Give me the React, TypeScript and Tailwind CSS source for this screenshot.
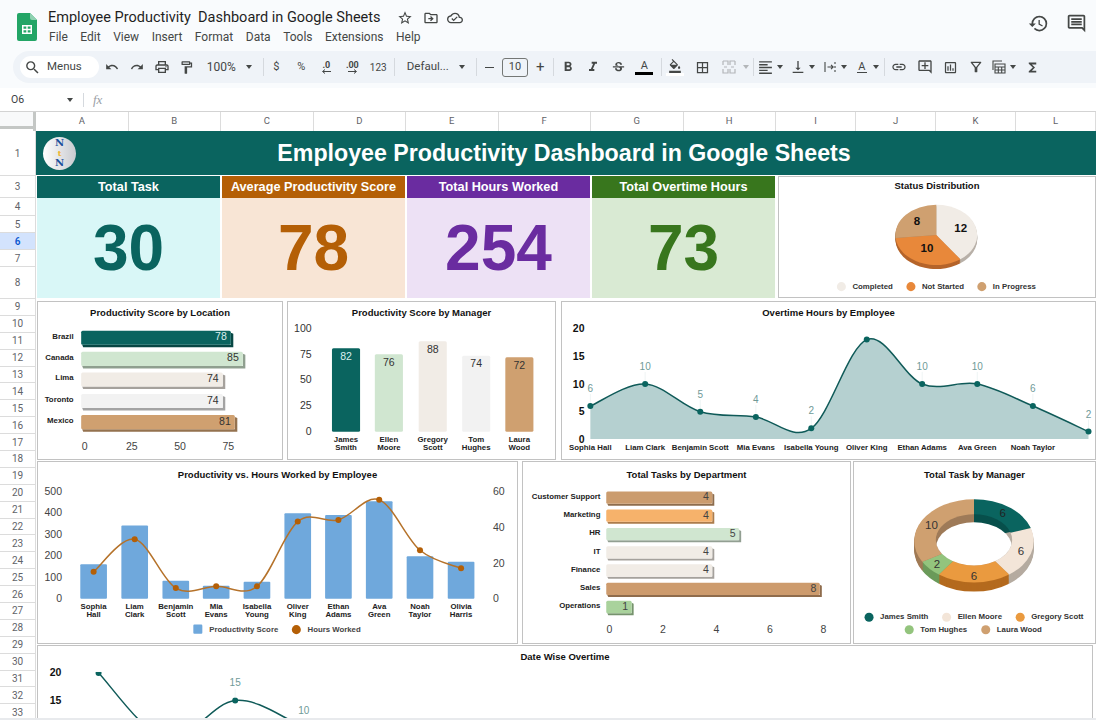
import React from 'react';
import {
  MdSearch, MdUndo, MdRedo, MdOutlinePrint, MdOutlineFormatPaint, MdFormatBold, MdFormatItalic,
  MdStrikethroughS, MdFormatColorFill, MdBorderAll, MdFormatAlignLeft, MdVerticalAlignBottom,
  MdOutlineStarBorder, MdOutlineDriveFileMove, MdOutlineCloudDone, MdHistory, MdLink,
  MdOutlineAddComment, MdOutlineInsertChart, MdOutlineFilterAlt, MdFunctions, MdOutlineInsertComment,
} from 'react-icons/md';

const TEAL = '#0a645f';

type Pt = [number, number];

/** Smooth line through points, same idea as the sheet's "smooth" option. */
function smooth(p: Pt[]) {
  let d = `M${p[0][0]} ${p[0][1]}`;
  for (let i = 0; i < p.length - 1; i++) {
    const a = p[Math.max(i - 1, 0)];
    const b = p[i];
    const c = p[i + 1];
    const e = p[Math.min(i + 2, p.length - 1)];
    d += ` C${b[0] + (c[0] - a[0]) / 6} ${b[1] + (c[1] - a[1]) / 6} ${c[0] - (e[0] - b[0]) / 6} ${c[1] - (e[1] - b[1]) / 6} ${c[0]} ${c[1]}`;
  }
  return d;
}

/** Angles in degrees, clockwise from 12 o'clock. */
function wedge(cx: number, cy: number, rx: number, ry: number, a0: number, a1: number) {
  const r0 = (a0 * Math.PI) / 180;
  const r1 = (a1 * Math.PI) / 180;
  const large = a1 - a0 > 180 ? 1 : 0;
  return `M${cx} ${cy} L${cx + rx * Math.sin(r0)} ${cy - ry * Math.cos(r0)} A${rx} ${ry} 0 ${large} 1 ${cx + rx * Math.sin(r1)} ${cy - ry * Math.cos(r1)} Z`;
}

function Caret({ className = '' }: { className?: string }) {
  return <span className={`h-0 w-0 shrink-0 border-x-[3.5px] border-t-[4px] border-x-transparent border-t-[#444746] ${className}`} />;
}

function Sep({ className = '' }: { className?: string }) {
  return <span className={`h-[18px] w-px shrink-0 bg-[#d5d9de] ${className}`} />;
}

function Tb({ className = '', children }: { className?: string; children: React.ReactNode }) {
  return <span className={`flex h-full shrink-0 items-center justify-center text-[#444746] ${className}`}>{children}</span>;
}

function Decimal({ label, left }: { label: string; left?: boolean }) {
  return (
    <span className="flex flex-col items-center leading-none">
      <span className="text-[9px] font-bold tracking-tight">{label}</span>
      <svg width="11" height="5" viewBox="0 0 11 5" className="-mt-px">
        {left ? <path d="M10 2.5H2M4 .5L1.5 2.5L4 4.5" fill="none" stroke="#444746" strokeWidth="1" /> : <path d="M1 2.5H9M7 .5L9.5 2.5L7 4.5" fill="none" stroke="#444746" strokeWidth="1" />}
      </svg>
    </span>
  );
}

function TitleBar() {
  const menus = ['File', 'Edit', 'View', 'Insert', 'Format', 'Data', 'Tools', 'Extensions', 'Help'];
  return (
    <div className="flex h-[51px] shrink-0 items-start">
      <svg width="20" height="28" viewBox="0 0 20 28" className="ml-[17px] mt-[13px] shrink-0">
        <path d="M2 0H13L20 7V26a2 2 0 0 1-2 2H2a2 2 0 0 1-2-2V2a2 2 0 0 1 2-2Z" fill="#23a566" />
        <path d="M13 0L20 7H15a2 2 0 0 1-2-2Z" fill="#8ed1b1" />
        <path d="M5 12H15V21H5Z M6.5 13.5V15.7H9.3V13.5Z M10.7 13.5V15.7H13.5V13.5Z M6.5 17.2V19.5H9.3V17.2Z M10.7 17.2V19.5H13.5V17.2Z" fill="#fff" fillRule="evenodd" />
      </svg>
      <div className="ml-[11px] flex flex-col">
        <div className="mt-[9px] flex h-[18px] items-center">
          <span className="w-[333px] whitespace-pre text-[14.5px] text-[#1f1f1f]">Employee Productivity  Dashboard in Google Sheets</span>
          <MdOutlineStarBorder className="ml-[16px] text-[#444746]" size={16} />
          <MdOutlineDriveFileMove className="ml-[10px] text-[#444746]" size={16} />
          <MdOutlineCloudDone className="ml-[8px] text-[#444746]" size={16} />
        </div>
        <div className="mt-[2px] flex gap-[12.5px] pl-px text-[12px] leading-[16px] text-[#444746]">
          {menus.map((m) => <span key={m}>{m}</span>)}
        </div>
      </div>
      <div className="ml-auto mr-[9px] mt-[13px] flex items-center gap-[17px] text-[#444746]">
        <MdHistory size={21} />
        <MdOutlineInsertComment size={21} />
      </div>
    </div>
  );
}

function Toolbar() {
  return (
    <div className="ml-[13px] flex h-[32px] shrink-0 items-center rounded-l-[16px] bg-[#eff3f8] pl-[7px] text-[11.5px] text-[#444746]">
      <div className="flex h-[22px] w-[79px] shrink-0 items-center rounded-full bg-white pl-[4px]">
        <MdSearch size={17} />
        <span className="ml-[6px]">Menus</span>
      </div>
      <Tb className="ml-px w-[24.7px]"><MdUndo size={14} /></Tb>
      <Tb className="w-[24.7px]"><MdRedo size={14} /></Tb>
      <Tb className="w-[24.7px]"><MdOutlinePrint size={16} /></Tb>
      <Tb className="w-[24.7px]"><MdOutlineFormatPaint size={15} /></Tb>
      <span className="ml-[8px] w-[30px] shrink-0 text-[12px]">100%</span>
      <Caret className="ml-[9px]" />
      <Sep className="ml-[11px]" />
      <Tb className="w-[25px] text-[11px]">$</Tb>
      <Tb className="w-[25px] text-[11px]">%</Tb>
      <Tb className="w-[25px]"><Decimal label=".0" left /></Tb>
      <Tb className="w-[27px]"><Decimal label=".00" /></Tb>
      <Tb className="w-[25px] text-[10px]">123</Tb>
      <Sep className="ml-[3.5px]" />
      <span className="ml-[11.5px] w-[45px] shrink-0">Defaul...</span>
      <Caret className="ml-[7px]" />
      <Sep className="ml-[11px]" />
      <Tb className="w-[25px]"><span className="h-px w-[9px] bg-[#444746]" /></Tb>
      <div className="flex h-[19px] w-[26.5px] shrink-0 items-center justify-center rounded-[3px] border border-[#747775] text-[11px]">10</div>
      <Tb className="w-[24px] text-[15px]">+</Tb>
      <Sep className="ml-px" />
      <Tb className="ml-[1.5px] w-[25px]"><MdFormatBold size={16} /></Tb>
      <Tb className="w-[25px]"><MdFormatItalic size={16} /></Tb>
      <Tb className="w-[25px]"><MdStrikethroughS size={15} /></Tb>
      <Tb className="w-[27px]">
        <span className="flex flex-col items-center leading-none">
          <span className="text-[11px]">A</span>
          <span className="mt-[1px] h-[3px] w-[18px] bg-black" />
        </span>
      </Tb>
      <Sep className="ml-[3px]" />
      <Tb className="w-[27px]">
        <span className="flex flex-col items-center leading-none">
          <MdFormatColorFill size={14} />
          <span className="h-[3px] w-[18px] bg-white" />
        </span>
      </Tb>
      <Tb className="w-[27px]"><MdBorderAll size={15} /></Tb>
      <Tb className="w-[27px]">
        <svg width="14" height="14" viewBox="0 0 14 14" fill="none" stroke="#b3b6b9" strokeWidth="1.2">
          <path d="M1 1H6V5M1 1V5M1 9V13H6V9M13 1H8V5M13 1V5M13 9V13H8V9M2 7H5M9 7H12" />
        </svg>
      </Tb>
      <Caret className="border-t-[#b3b6b9]" />
      <Sep className="ml-[4px]" />
      <Tb className="ml-[1px] w-[22px]"><MdFormatAlignLeft size={17} /></Tb>
      <Caret className="ml-[0.5px]" />
      <Tb className="ml-[3.5px] w-[22px]"><MdVerticalAlignBottom size={16} /></Tb>
      <Caret className="ml-[0.5px]" />
      <Tb className="ml-[3.5px] w-[22px]">
        <svg width="12" height="12" viewBox="0 0 12 12" fill="none" stroke="#444746" strokeWidth="1.1">
          <path d="M1 1V11M11 1V3M11 5V7M11 9V11M3.5 6H9M7 3.8L9.2 6L7 8.2" />
        </svg>
      </Tb>
      <Caret />
      <Tb className="ml-[4px] w-[22px]">
        <span className="flex flex-col items-center leading-none">
          <span className="text-[11px]">A</span>
          <span className="h-px w-[10px] bg-[#444746]" />
        </span>
      </Tb>
      <Caret />
      <Sep className="ml-[5.5px]" />
      <Tb className="ml-[2px] w-[24px]"><MdLink size={16} /></Tb>
      <Tb className="ml-px w-[26px]"><MdOutlineAddComment size={16} /></Tb>
      <Tb className="w-[25px]"><MdOutlineInsertChart size={15} /></Tb>
      <Tb className="w-[25px]"><MdOutlineFilterAlt size={16} /></Tb>
      <Tb className="w-[22px]">
        <svg width="14" height="14" viewBox="0 0 14 14" fill="none" stroke="#444746" strokeWidth="1.1">
          <path d="M1 10V1H10M3 4H13V13H3ZM3 7H13M6.3 7V13M9.7 7V13M3 10H13" />
        </svg>
      </Tb>
      <Caret />
      <Tb className="ml-[5px] w-[23px]"><MdFunctions size={15} /></Tb>
    </div>
  );
}

function FormulaBar() {
  return (
    <div className="mt-[5px] flex h-[24px] shrink-0 items-center border-b border-[#d3d3d3] bg-white text-[10.5px] text-[#3c4043]">
      <span className="ml-[11px] w-[56px]">O6</span>
      <Caret />
      <span className="ml-[10px] h-[14px] w-px bg-[#d5d9de]" />
      <span className="ml-[9px] font-['Liberation_Serif',serif] text-[13px] italic text-[#9aa0a6]">fx</span>
    </div>
  );
}

function ColumnHeaders() {
  const cols: [string, string][] = [
    ['A', 'w-[92.5px]'], ['B', 'w-[92.5px]'], ['C', 'w-[92.5px]'], ['D', 'w-[92.5px]'],
    ['E', 'w-[92.5px]'], ['F', 'w-[92.5px]'], ['G', 'w-[92.5px]'], ['H', 'w-[92.5px]'],
    ['I', 'w-[80px]'], ['J', 'w-[80px]'], ['K', 'w-[80px]'], ['L', 'w-[80px]'],
  ];
  return (
    <div className="flex h-[19px] shrink-0 bg-white">
      <div className="flex h-full w-[36px] shrink-0 flex-col border-r-[3px] border-[#c4c7c5]">
        <div className="h-[14px] bg-[#f8f9fa]" />
        <div className="h-[3px] bg-[#c4c7c5]" />
      </div>
      {cols.map(([c, w]) => (
        <div key={c} className={`flex shrink-0 items-center justify-center border-r border-[#dcdcdc] text-[9.5px] text-[#5f6368] ${w}`}>{c}</div>
      ))}
    </div>
  );
}

function RowHeaders() {
  const rows: [string, string][] = [
    ['1', 'h-[45px]'], ['3', 'h-[22px]'], ['4', 'h-[18px]'], ['5', 'h-[17px]'], ['6', 'h-[17px]'], ['7', 'h-[17px]'], ['8', 'h-[32px]'],
  ];
  for (let i = 9; i <= 33; i++) rows.push([String(i), 'h-[16.9px]']);
  return (
    <div className="flex h-full w-[36px] shrink-0 flex-col overflow-hidden bg-white">
      {rows.map(([r, h]) => (
        <div key={r} className={`flex shrink-0 items-center justify-center border-b border-r border-[#dcdcdc] text-[10px] ${r === '6' ? 'bg-[#d3e3fd] font-semibold text-[#0b57d0]' : 'text-[#5f6368]'} ${h}`}>{r}</div>
      ))}
    </div>
  );
}

function Banner() {
  return (
    <div className="flex h-[44px] shrink-0 items-center bg-[#0a645f]">
      <div className="ml-[7px] flex h-[33px] w-[33px] shrink-0 flex-col items-center justify-center rounded-full bg-gradient-to-r from-white to-[#c9cbd0] font-['DejaVu_Serif',serif] text-[10px] font-bold leading-[10px] text-[#1b4f9c]">
        <span>N</span>
        <span className="text-[8px] text-[#f0b429]">t</span>
        <span>N</span>
      </div>
      <div className="flex-1 pr-[44px] pt-[2px] text-center text-[23.2px] font-bold leading-none text-white">Employee Productivity Dashboard in Google Sheets</div>
    </div>
  );
}

function Kpi({ label, value, head, body, color }: { label: string; value: number; head: string; body: string; color: string }) {
  return (
    <div className={`flex w-[183px] shrink-0 flex-col ${body}`}>
      <div className={`flex h-[22px] items-center justify-center pt-px text-[12.7px] font-bold text-white ${head}`}>{label}</div>
      <div className={`flex flex-1 items-center justify-center text-[64px] font-bold leading-none ${color}`}>{value}</div>
    </div>
  );
}

const TITLE_H: Record<number, string> = { 18: 'h-[18px]', 22: 'h-[22px]', 26: 'h-[26px]' };
const BORDER = 1.5;

/** Bordered chart box. x/y/w/h are page coordinates, so the plot can be drawn in page coordinates too. */
function Card({ title, x, y, w, h, th, className, children }: { title: string; x: number; y: number; w: number; h: number; th: number; className: string; children: React.ReactNode }) {
  return (
    <div className={`flex shrink-0 flex-col overflow-hidden border-[1.5px] border-[#c2c2c2] bg-white ${className}`}>
      <div className={`flex shrink-0 items-center justify-center text-[9.5px] font-bold text-[#111] ${TITLE_H[th]}`}>{title}</div>
      <svg viewBox={`${x + BORDER} ${y + BORDER + th} ${w - 2 * BORDER} ${h - 2 * BORDER - th}`} className="min-h-0 w-full flex-1 overflow-visible font-['Liberation_Sans',sans-serif]">
        {children}
      </svg>
    </div>
  );
}

function Label({ x, y, anchor = 'middle', className, children }: { x: number; y: number; anchor?: 'start' | 'middle' | 'end'; className: string; children: React.ReactNode }) {
  return <text x={x} y={y} textAnchor={anchor} dominantBaseline="central" className={className}>{children}</text>;
}

function Bar3d({ x, y, w, h, d, fill, side }: { x: number; y: number; w: number; h: number; d: number; fill: string; side: string }) {
  return (
    <g>
      <path d={`M${x + 1} ${y + h} H${x + w} V${y + 2} L${x + w + d} ${y + 3} V${y + h + d} H${x + 2} Z`} fill={side} />
      <rect x={x} y={y} width={w} height={h} rx={1.5} fill={fill} />
    </g>
  );
}

function LocationChart() {
  const rows = [
    { n: 'Brazil', v: 78, y: 331, w: 149, fill: '#0a645f', side: '#074744', t: 'fill-[#d9eeee]' },
    { n: 'Canada', v: 85, y: 352, w: 161, fill: '#d0e6d0', side: '#8f9f8f', t: 'fill-[#333]' },
    { n: 'Lima', v: 74, y: 372.5, w: 141, fill: '#f1ece6', side: '#a5a19c', t: 'fill-[#333]' },
    { n: 'Toronto', v: 74, y: 394, w: 141, fill: '#f2f2f2', side: '#a3a3a3', t: 'fill-[#333]' },
    { n: 'Mexico', v: 81, y: 415, w: 153, fill: '#cfa070', side: '#94724f', t: 'fill-[#333]' },
  ];
  return (
    <Card title="Productivity Score by Location" x={37} y={301} w={246} h={159} th={22} className="w-[246px]">
      {rows.map((r) => (
        <g key={r.n}>
          <Bar3d x={81.5} y={r.y} w={r.w} h={14} d={2.5} fill={r.fill} side={r.side} />
          <Label x={74} y={r.y + 5.5} anchor="end" className="fill-[#222] text-[7.8px] font-bold">{r.n}</Label>
          <Label x={81.5 + r.w - 4} y={r.y + 5.5} anchor="end" className={`text-[10.5px] ${r.t}`}>{r.v}</Label>
        </g>
      ))}
      {[['0', 85], ['25', 132], ['50', 180], ['75', 228]].map(([t, x]) => (
        <Label key={t} x={x as number} y={446} className="fill-[#444] text-[10.5px]">{t}</Label>
      ))}
    </Card>
  );
}

function ManagerChart() {
  const bars = [
    { a: 'James', b: 'Smith', v: 82, x: 332.3, top: 348.3, fill: '#0a645f', t: 'fill-[#d9eeee]' },
    { a: 'Ellen', b: 'Moore', v: 76, x: 375, top: 354.3, fill: '#d0e6d0', t: 'fill-[#333]' },
    { a: 'Gregory', b: 'Scott', v: 88, x: 418.7, top: 341.5, fill: '#f1ece6', t: 'fill-[#333]' },
    { a: 'Tom', b: 'Hughes', v: 74, x: 462, top: 356, fill: '#f2f2f2', t: 'fill-[#333]' },
    { a: 'Laura', b: 'Wood', v: 72, x: 505, top: 357.5, fill: '#cfa070', t: 'fill-[#333]' },
  ];
  return (
    <Card title="Productivity Score by Manager" x={287} y={301} w={269} h={159} th={22} className="w-[269px]">
      {[['100', 328], ['75', 354.5], ['50', 379.5], ['25', 405], ['0', 431]].map(([t, y]) => (
        <Label key={t} x={312} y={y as number} anchor="end" className="fill-[#333] text-[10.5px]">{t}</Label>
      ))}
      {bars.map((b) => (
        <g key={b.a}>
          <rect x={b.x} y={b.top} width={28} height={431.7 - b.top} rx={1.5} fill={b.fill} />
          <Label x={b.x + 14} y={b.top + 7.5} className={`text-[10.5px] ${b.t}`}>{b.v}</Label>
          <Label x={b.x + 14} y={439} className="fill-[#222] text-[7.8px] font-bold">{b.a}</Label>
          <Label x={b.x + 14} y={447} className="fill-[#222] text-[7.8px] font-bold">{b.b}</Label>
        </g>
      ))}
    </Card>
  );
}

function OvertimeChart() {
  const names = ['Sophia Hall', 'Liam Clark', 'Benjamin Scott', 'Mia Evans', 'Isabella Young', 'Oliver King', 'Ethan Adams', 'Ava Green', 'Noah Taylor', ''];
  const vals = [6, 10, 5, 4, 2, 18, 10, 10, 6, 2];
  const xs = [590.8, 645.5, 700.5, 756, 811.3, 866.7, 922, 977, 1032.5, 1088];
  const ys = [406, 384, 411.7, 417, 428.3, 339.7, 384, 384, 406, 431.5];
  const pts = xs.map((x, i) => [x, ys[i]] as Pt);
  const line = smooth(pts);
  return (
    <Card title="Overtime Hours by Employee" x={561} y={301} w={535} h={159} th={22} className="w-[535px]">
      <path d={`${line} V439 H590.8 Z`} fill="#b5d0d0" />
      <path d={line} fill="none" stroke="#0f5a58" strokeWidth="1.5" />
      {pts.map(([x, y], i) => (
        <g key={x}>
          {vals[i] !== 18 && <line x1={x} x2={x} y1={y - 12} y2={y - 3} stroke="#e3ecec" strokeWidth="0.6" />}
          <circle cx={x} cy={y} r={3} fill={TEAL} />
          {vals[i] !== 18 && <Label x={x} y={y - 17.5} className="fill-[#6f9a98] text-[10px]">{vals[i]}</Label>}
          <Label x={x} y={447.5} className="fill-[#222] text-[7.8px] font-bold">{names[i]}</Label>
        </g>
      ))}
      {[['20', 328], ['15', 356.5], ['10', 384], ['5', 411], ['0', 438.5]].map(([t, y]) => (
        <Label key={t} x={585} y={y as number} anchor="end" className="fill-[#111] text-[10.5px] font-bold">{t}</Label>
      ))}
    </Card>
  );
}

function HoursChart() {
  const people: [string, string][] = [['Sophia', 'Hall'], ['Liam', 'Clark'], ['Benjamin', 'Scott'], ['Mia', 'Evans'], ['Isabella', 'Young'], ['Oliver', 'King'], ['Ethan', 'Adams'], ['Ava', 'Green'], ['Noah', 'Taylor'], ['Olivia', 'Harris']];
  const xs = [94, 135, 176, 216.3, 257, 297.7, 338.3, 379, 419.7, 460.7];
  const tops = [564.3, 525.7, 580.7, 585.7, 581.7, 513.3, 515, 501.3, 556.3, 561.7];
  const ys = [571.7, 539.3, 588, 586.3, 586.3, 521.7, 520, 500, 550.3, 568.3];
  const pts = xs.map((x, i) => [x, ys[i]] as Pt);
  return (
    <Card title="Productivity vs. Hours Worked by Employee" x={37} y={461} w={481} h={183} th={26} className="w-[481px]">
      {[['500', 490.7], ['400', 512], ['300', 533.7], ['200', 555], ['100', 576.7], ['0', 598]].map(([t, y]) => (
        <Label key={t} x={62.5} y={y as number} anchor="end" className="fill-[#444] text-[10.5px]">{t}</Label>
      ))}
      {[['60', 491], ['40', 527], ['20', 563], ['0', 598]].map(([t, y]) => (
        <Label key={t} x={492.5} y={y as number} anchor="start" className="fill-[#444] text-[10.5px]">{t}</Label>
      ))}
      {xs.map((x, i) => (
        <g key={x}>
          <rect x={x - 13.3} y={tops[i]} width={26.6} height={598.7 - tops[i]} rx={1} fill="#6fa8dc" />
          <Label x={x} y={606.5} className="fill-[#222] text-[7.8px] font-bold">{people[i][0]}</Label>
          <Label x={x} y={614.5} className="fill-[#222] text-[7.8px] font-bold">{people[i][1]}</Label>
        </g>
      ))}
      <path d={smooth(pts)} fill="none" stroke="#b5722a" strokeWidth="1.5" />
      {pts.map(([x, y]) => <circle key={x} cx={x} cy={y} r={3} fill="#b45f06" />)}
      <rect x={193.5} y={624.5} width={9} height={9} rx={1} fill="#6fa8dc" />
      <Label x={209.5} y={629} anchor="start" className="fill-[#444] text-[7.8px] font-bold">Productivity Score</Label>
      <circle cx={296.3} cy={629.5} r={4.5} fill="#b45f06" />
      <Label x={307.5} y={629} anchor="start" className="fill-[#444] text-[7.8px] font-bold">Hours Worked</Label>
    </Card>
  );
}

function DepartmentChart() {
  const rows = [
    { n: 'Customer Support', v: 4, y: 491.7, fill: '#cb9c6e', side: '#8e6d4d' },
    { n: 'Marketing', v: 4, y: 509.7, fill: '#f6b26b', side: '#ac7c4b' },
    { n: 'HR', v: 5, y: 528, fill: '#d0e6d0', side: '#929f92' },
    { n: 'IT', v: 4, y: 546.3, fill: '#f1ece6', side: '#a5a19c' },
    { n: 'Finance', v: 4, y: 564.3, fill: '#f1ece6', side: '#a5a19c' },
    { n: 'Sales', v: 8, y: 582.7, fill: '#cd9b6d', side: '#8f6c4c' },
    { n: 'Operations', v: 1, y: 600.7, fill: '#a9d29c', side: '#76936d' },
  ];
  return (
    <Card title="Total Tasks by Department" x={522} y={461} w={329} h={183} th={26} className="w-[329px]">
      {rows.map((r) => (
        <g key={r.n}>
          <Bar3d x={606.5} y={r.y} w={r.v * 26.8 - 1.5} h={12.3} d={2} fill={r.fill} side={r.side} />
          <Label x={600.7} y={r.y + 5} anchor="end" className="fill-[#222] text-[7.8px] font-bold">{r.n}</Label>
          <Label x={606.5 + r.v * 26.8 - 5} y={r.y + 5} anchor="end" className="fill-[#444] text-[10.5px]">{r.v}</Label>
        </g>
      ))}
      {[0, 2, 4, 6, 8].map((t) => (
        <Label key={t} x={609.7 + t * 26.66} y={629} className="fill-[#444] text-[10.5px]">{t}</Label>
      ))}
    </Card>
  );
}

function LegendItem({ cx, y, fill, text }: { cx: number; y: number; fill: string; text: string }) {
  return (
    <g>
      <circle cx={cx} cy={y} r={4.5} fill={fill} />
      <Label x={cx + 11} y={y - 0.5} anchor="start" className="fill-[#333] text-[7.8px] font-bold">{text}</Label>
    </g>
  );
}

function DonutChart() {
  const cx = 974;
  const cy = 541;
  const depth = 9;
  const slices = [
    { a0: 0, a1: 72, top: '#0a645f', side: '#07403d', wall: '#074f4b' },
    { a0: 72, a1: 144, top: '#f3e5d8', side: '#b5aba0', wall: '#b5aba0' },
    { a0: 144, a1: 216, top: '#ea9a3f', side: '#b46a1e', wall: '#b46a1e' },
    { a0: 216, a1: 240, top: '#93c47d', side: '#6b9a5a', wall: '#6b9a5a' },
    { a0: 240, a1: 360, top: '#cfa070', side: '#a07a55', wall: '#9e7a58' },
  ];
  const layers = Array.from({ length: depth }, (_, i) => depth - i);
  return (
    <Card title="Total Task by Manager" x={853} y={461} w={243} h={183} th={26} className="w-[243px]">
      <defs>
        <clipPath id="donut-hole"><ellipse cx={cx} cy={cy - 1} rx={38} ry={25.5} /></clipPath>
      </defs>
      {layers.map((d) => slices.map((s) => <path key={`${d}-${s.a0}`} d={wedge(cx, cy + d, 59.5, 41.5, s.a0, s.a1)} fill={s.side} />))}
      {slices.map((s) => <path key={s.a0} d={wedge(cx, cy, 59.5, 41.5, s.a0, s.a1)} fill={s.top} />)}
      {slices.map((s) => <path key={s.a0} d={wedge(cx, cy - 1, 38, 25.5, s.a0, s.a1)} fill={s.wall} />)}
      <ellipse cx={cx} cy={cy + 7} rx={38} ry={25.5} fill="#fff" clipPath="url(#donut-hole)" />
      <Label x={1002.7} y={513.5} className="fill-[#222] text-[11.5px]">6</Label>
      <Label x={1020.7} y={551.5} className="fill-[#333] text-[11.5px]">6</Label>
      <Label x={974} y={575.5} className="fill-[#333] text-[11.5px]">6</Label>
      <Label x={937} y={564.5} className="fill-[#333] text-[11.5px]">2</Label>
      <Label x={931.7} y={525} className="fill-[#333] text-[11.5px]">10</Label>
      <LegendItem cx={869.5} y={617} fill="#0a645f" text="James Smith" />
      <LegendItem cx={946.7} y={617} fill="#f3e5d8" text="Ellen Moore" />
      <LegendItem cx={1020} y={617} fill="#ea9a3f" text="Gregory Scott" />
      <LegendItem cx={909.5} y={629.5} fill="#93c47d" text="Tom Hughes" />
      <LegendItem cx={985.7} y={629.5} fill="#cfa070" text="Laura Wood" />
    </Card>
  );
}

function StatusChart() {
  const cx = 936.3;
  const cy = 235;
  const slices = [
    { a0: 0, a1: 144, top: '#f1ece6', side: '#b8b0a8' },
    { a0: 144, a1: 264, top: '#e8883a', side: '#b5642a' },
    { a0: 264, a1: 360, top: '#cfa070', side: '#a57c55' },
  ];
  return (
    <Card title="Status Distribution" x={778} y={176} w={318} h={122} th={18} className="w-[318px]">
      {[4, 3, 2, 1].map((d) => slices.map((s) => <path key={`${d}-${s.a0}`} d={wedge(cx, cy + d, 40.8, 30, s.a0, s.a1)} fill={s.side} />))}
      {slices.map((s) => <path key={s.a0} d={wedge(cx, cy, 40.8, 30, s.a0, s.a1)} fill={s.top} />)}
      <Label x={960.7} y={228} className="fill-[#111] text-[11.5px] font-bold">12</Label>
      <Label x={927} y={248.3} className="fill-[#111] text-[11.5px] font-bold">10</Label>
      <Label x={917} y={221} className="fill-[#111] text-[11.5px] font-bold">8</Label>
      <LegendItem cx={841.7} y={286.5} fill="#f1ece6" text="Completed" />
      <LegendItem cx={911} y={286.5} fill="#e8883a" text="Not Started" />
      <LegendItem cx={981.7} y={286.5} fill="#cfa070" text="In Progress" />
    </Card>
  );
}

function DateChart() {
  const pts: Pt[] = [[99, 673], [167, 739], [235.5, 700.5], [304, 727], [372, 760]];
  return (
    <Card title="Date Wise Overtime" x={37} y={645} w={1056} h={80} th={22} className="w-[1056px]">
      <Label x={56} y={672.5} className="fill-[#111] text-[10.5px] font-bold">20</Label>
      <Label x={56} y={700} className="fill-[#111] text-[10.5px] font-bold">15</Label>
      <path d={smooth(pts)} fill="none" stroke="#0f5a58" strokeWidth="1.5" />
      <circle cx={99} cy={673} r={3} fill={TEAL} />
      <rect x={94} y={668} width={10} height={4} fill="#fff" />
      <circle cx={235.5} cy={700.5} r={3} fill={TEAL} />
      <line x1={235.5} x2={235.5} y1={689} y2={698} stroke="#e3ecec" strokeWidth="0.6" />
      <Label x={235.5} y={683} className="fill-[#6f9a98] text-[10px]">15</Label>
      <Label x={304} y={710} className="fill-[#6f9a98] text-[10px]">10</Label>
      <Label x={167} y={722} className="fill-[#6f9a98] text-[10px]">5</Label>
    </Card>
  );
}

export default function App() {
  return (
    <div className="relative flex h-[720px] w-[1096px] flex-col overflow-hidden bg-[#f9fbfd] font-['Roboto',sans-serif]">
      <TitleBar />
      <Toolbar />
      <FormulaBar />
      <ColumnHeaders />
      <div className="flex min-h-0 flex-1 bg-white">
        <RowHeaders />
        <div className="flex h-full w-[1060px] shrink-0 flex-col font-['Liberation_Sans',sans-serif]">
          <Banner />
          <div className="mt-[1px] flex h-[122px] shrink-0 gap-[2px] pl-px">
            <Kpi label="Total Task" value={30} head="bg-[#0a645f]" body="bg-[#d9f7f7]" color="text-[#0a645f]" />
            <Kpi label="Average Productivity Score" value={78} head="bg-[#b45f06]" body="bg-[#f8e5d5]" color="text-[#b45f06]" />
            <Kpi label="Total Hours Worked" value={254} head="bg-[#6a2ca0]" body="bg-[#ede1f5]" color="text-[#6a2ca0]" />
            <Kpi label="Total Overtime Hours" value={73} head="bg-[#38761d]" body="bg-[#d9ead3]" color="text-[#38761d]" />
            <div className="ml-px flex">
              <StatusChart />
            </div>
          </div>
          <div className="mt-[3px] flex h-[159px] shrink-0 pl-px">
            <LocationChart />
            <div className="ml-[4px] flex"><ManagerChart /></div>
            <div className="ml-[5px] flex"><OvertimeChart /></div>
          </div>
          <div className="mt-px flex h-[183px] shrink-0 pl-px">
            <HoursChart />
            <div className="ml-[4px] flex"><DepartmentChart /></div>
            <div className="ml-[2px] flex"><DonutChart /></div>
          </div>
          <div className="mt-px flex h-[80px] shrink-0 pl-px">
            <DateChart />
          </div>
        </div>
      </div>
      <div className="absolute inset-x-0 bottom-0 h-[2px] bg-[#e8eaed]" />
    </div>
  );
}
